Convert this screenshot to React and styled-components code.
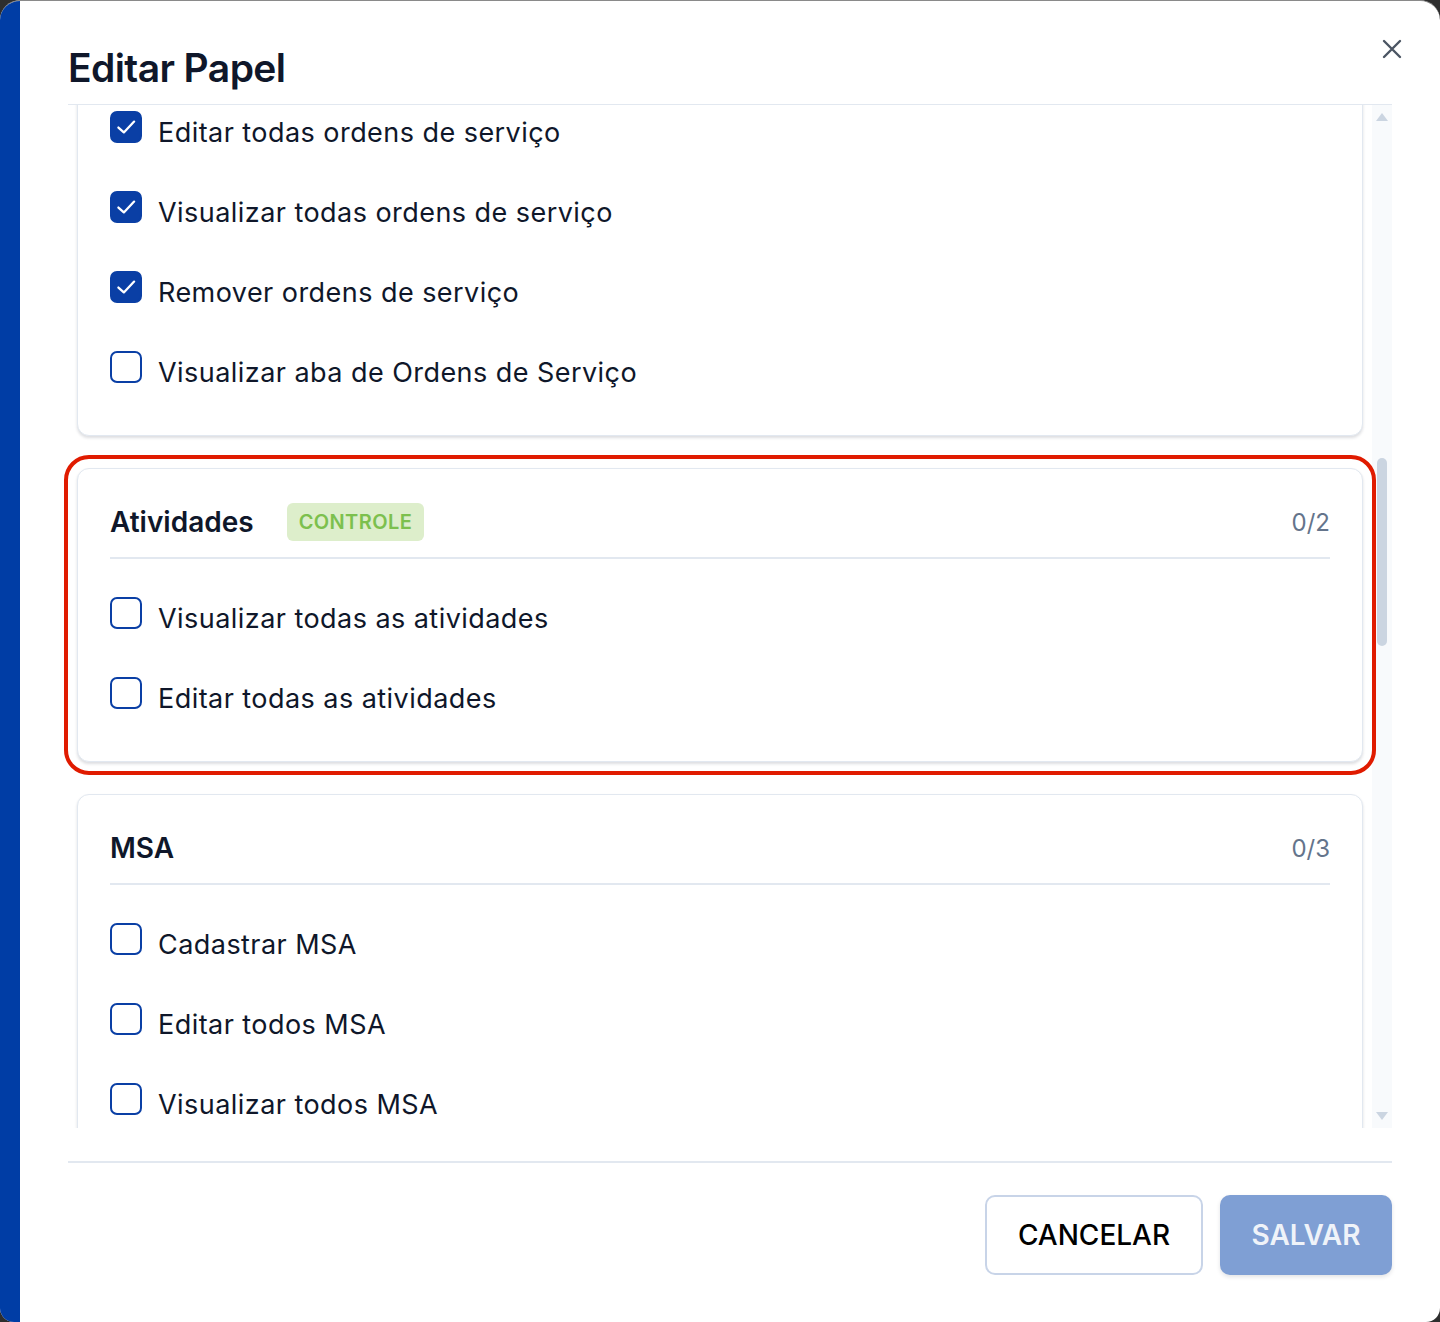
import styled, { createGlobalStyle } from "styled-components";

const GlobalStyle = createGlobalStyle`
  html, body {
    margin: 0;
    padding: 0;
    background: #2e2e2e;
  }
  * { box-sizing: border-box; }
`;

const sections = [
  {
    title: "Ordens de Serviço",
    count: "4/5",
    items: [
      { label: "Cadastrar ordens de serviço", checked: true },
      { label: "Editar todas ordens de serviço", checked: true },
      { label: "Visualizar todas ordens de serviço", checked: true },
      { label: "Remover ordens de serviço", checked: true },
      { label: "Visualizar aba de Ordens de Serviço", checked: false },
    ],
  },
  {
    title: "Atividades",
    badge: "CONTROLE",
    count: "0/2",
    highlight: true,
    items: [
      { label: "Visualizar todas as atividades", checked: false },
      { label: "Editar todas as atividades", checked: false },
    ],
  },
  {
    title: "MSA",
    count: "0/3",
    items: [
      { label: "Cadastrar MSA", checked: false },
      { label: "Editar todos MSA", checked: false },
      { label: "Visualizar todos MSA", checked: false },
    ],
  },
];

const App = () => {
  return (
    <>
      <GlobalStyle />
      <Frame>
        <Stripe />
        <Dialog>
          <CloseButton aria-label="Fechar">
            <svg width="20" height="20" viewBox="0 0 20 20">
              <path d="M2 2 L18 18 M18 2 L2 18" stroke="#4b5563" strokeWidth="2.4" strokeLinecap="round" />
            </svg>
          </CloseButton>
          <Header>
            <Title>Editar Papel</Title>
          </Header>
          <BodyRow>
            <ScrollBody>
              <CardList>
                {sections.map((s) => (
                  <Card key={s.title} $highlight={s.highlight}>
                    <CardHeader>
                      <SectionTitle>{s.title}</SectionTitle>
                      {s.badge && <Badge>{s.badge}</Badge>}
                      <Count>{s.count}</Count>
                    </CardHeader>
                    <ItemList>
                      {s.items.map((it) => (
                        <Item key={it.label}>
                          <CheckBox $checked={it.checked}>
                            {it.checked && (
                              <svg width="26" height="26" viewBox="0 0 24 24">
                                <path d="M5 12.5 L10 17 L19.5 7" fill="none" stroke="#fff" strokeWidth="2.1" strokeLinecap="round" strokeLinejoin="round" />
                              </svg>
                            )}
                          </CheckBox>
                          <ItemLabel>{it.label}</ItemLabel>
                        </Item>
                      ))}
                    </ItemList>
                  </Card>
                ))}
              </CardList>
            </ScrollBody>
            <Track>
              <Arrow />
              <Thumb />
              <Arrow $down />
            </Track>
          </BodyRow>
          <Footer>
            <CancelButton>CANCELAR</CancelButton>
            <SaveButton>SALVAR</SaveButton>
          </Footer>
        </Dialog>
      </Frame>
    </>
  );
};
export default App;

const Frame = styled.div`
  width: 1440px;
  height: 1322px;
  display: flex;
  border-radius: 20px 20px 14px 14px;
  overflow: hidden;
  border-top: 1px solid #8a8a8a;
  background: #fff;
  font-family: Inter, "Noto Sans", sans-serif;
  color: #0f172a;
`;

const Stripe = styled.div`
  width: 20px;
  flex-shrink: 0;
  background-color: #003da5;
`;

const Dialog = styled.div`
  position: relative;
  flex: 1;
  display: flex;
  flex-direction: column;
  padding: 0 48px 0 48px;
`;

const CloseButton = styled.button`
  position: absolute;
  top: 38px;
  right: 38px;
  border: none;
  background: transparent;
  padding: 0;
  width: 20px;
  height: 20px;
  cursor: pointer;
`;

const Header = styled.div`
  height: 104px;
  padding-top: 43px;
  border-bottom: 1px solid #e2e8f0;
`;

const Title = styled.h1`
  margin: 0;
  font-size: 39px;
  line-height: 48px;
  font-weight: 600;
  letter-spacing: -0.6px;
  color: #0f172a;
`;

const BodyRow = styled.div`
  height: 1023px;
  display: flex;
`;

const ScrollBody = styled.div`
  position: relative;
  z-index: 1;
  flex: 1;
  clip-path: inset(0 -24px);
  padding: 0 9px;
`;

const CardList = styled.div`
  display: flex;
  flex-direction: column;
  gap: 32px;
  margin-top: -203px;
`;

const Card = styled.div`
  border: 1px solid #e2e8f0;
  border-radius: 12px;
  box-shadow: 0 2px 3px rgba(15, 23, 42, 0.14);
  padding: 0 32px;
  background: #fff;
  ${(p) =>
    p.$highlight &&
    `
    outline: 4px solid #e01b00;
    outline-offset: 9px;
  `}
`;

const CardHeader = styled.div`
  display: flex;
  align-items: center;
  padding: 35px 0 17px;
  border-bottom: 2px solid #e2e8f0;
  height: 90px;
`;

const SectionTitle = styled.span`
  font-size: 28px;
  line-height: 36px;
  font-weight: 600;
  color: #0f172a;
`;

const Badge = styled.span`
  margin-left: 33px;
  height: 38px;
  display: inline-flex;
  align-items: center;
  padding: 0 12px;
  border-radius: 6px;
  background: #ddeecb;
  color: #7cc04e;
  font-size: 20px;
  font-weight: 600;
  letter-spacing: 0.4px;
`;

const Count = styled.span`
  margin-left: auto;
  font-size: 24px;
  color: #64748b;
`;

const ItemList = styled.div`
  padding: 19px 0 23px;
`;

const Item = styled.div`
  height: 80px;
  display: flex;
  align-items: center;
  gap: 16px;
`;

const CheckBox = styled.span`
  width: 32px;
  height: 32px;
  flex-shrink: 0;
  border-radius: 7px;
  margin-bottom: 10px;
  display: flex;
  align-items: center;
  justify-content: center;
  background: ${(p) => (p.$checked ? "#0a3fa5" : "#fff")};
  border: 2px solid #0a3fa5;
`;

const ItemLabel = styled.span`
  font-size: 27px;
  color: #0f172a;
  letter-spacing: 0.45px;
`;

const Track = styled.div`
  width: 20px;
  background: #f8fafc;
  display: flex;
  flex-direction: column;
  align-items: center;
  padding: 8px 0;
`;

const Arrow = styled.div`
  width: 0;
  height: 0;
  border-left: 6px solid transparent;
  border-right: 6px solid transparent;
  ${(p) =>
    p.$down
      ? "border-top: 8px solid #cbd5e1; margin-top: auto;"
      : "border-bottom: 8px solid #cbd5e1;"}
`;

const Thumb = styled.div`
  width: 10px;
  height: 188px;
  margin-top: 337px;
  border-radius: 5px;
  background: #cbd5e1;
`;

const Footer = styled.div`
  margin-top: 33px;
  border-top: 2px solid #e2e8f0;
  padding: 32px 0 47px;
  display: flex;
  justify-content: flex-end;
  gap: 17px;
`;

const CancelButton = styled.button`
  width: 218px;
  height: 80px;
  border: 2px solid #c8d4e8;
  border-radius: 10px;
  background: #fff;
  font-family: Inter, "Noto Sans", sans-serif;
  font-size: 28px;
  font-weight: 500;
  color: #000;
  cursor: pointer;
`;

const SaveButton = styled.button`
  width: 172px;
  height: 80px;
  border: none;
  border-radius: 10px;
  background: #7f9fd4;
  font-family: Inter, "Noto Sans", sans-serif;
  font-size: 28px;
  font-weight: 600;
  color: rgba(255, 255, 255, 0.88);
  box-shadow: 0 2px 4px rgba(15, 23, 42, 0.12);
  cursor: pointer;
`;
